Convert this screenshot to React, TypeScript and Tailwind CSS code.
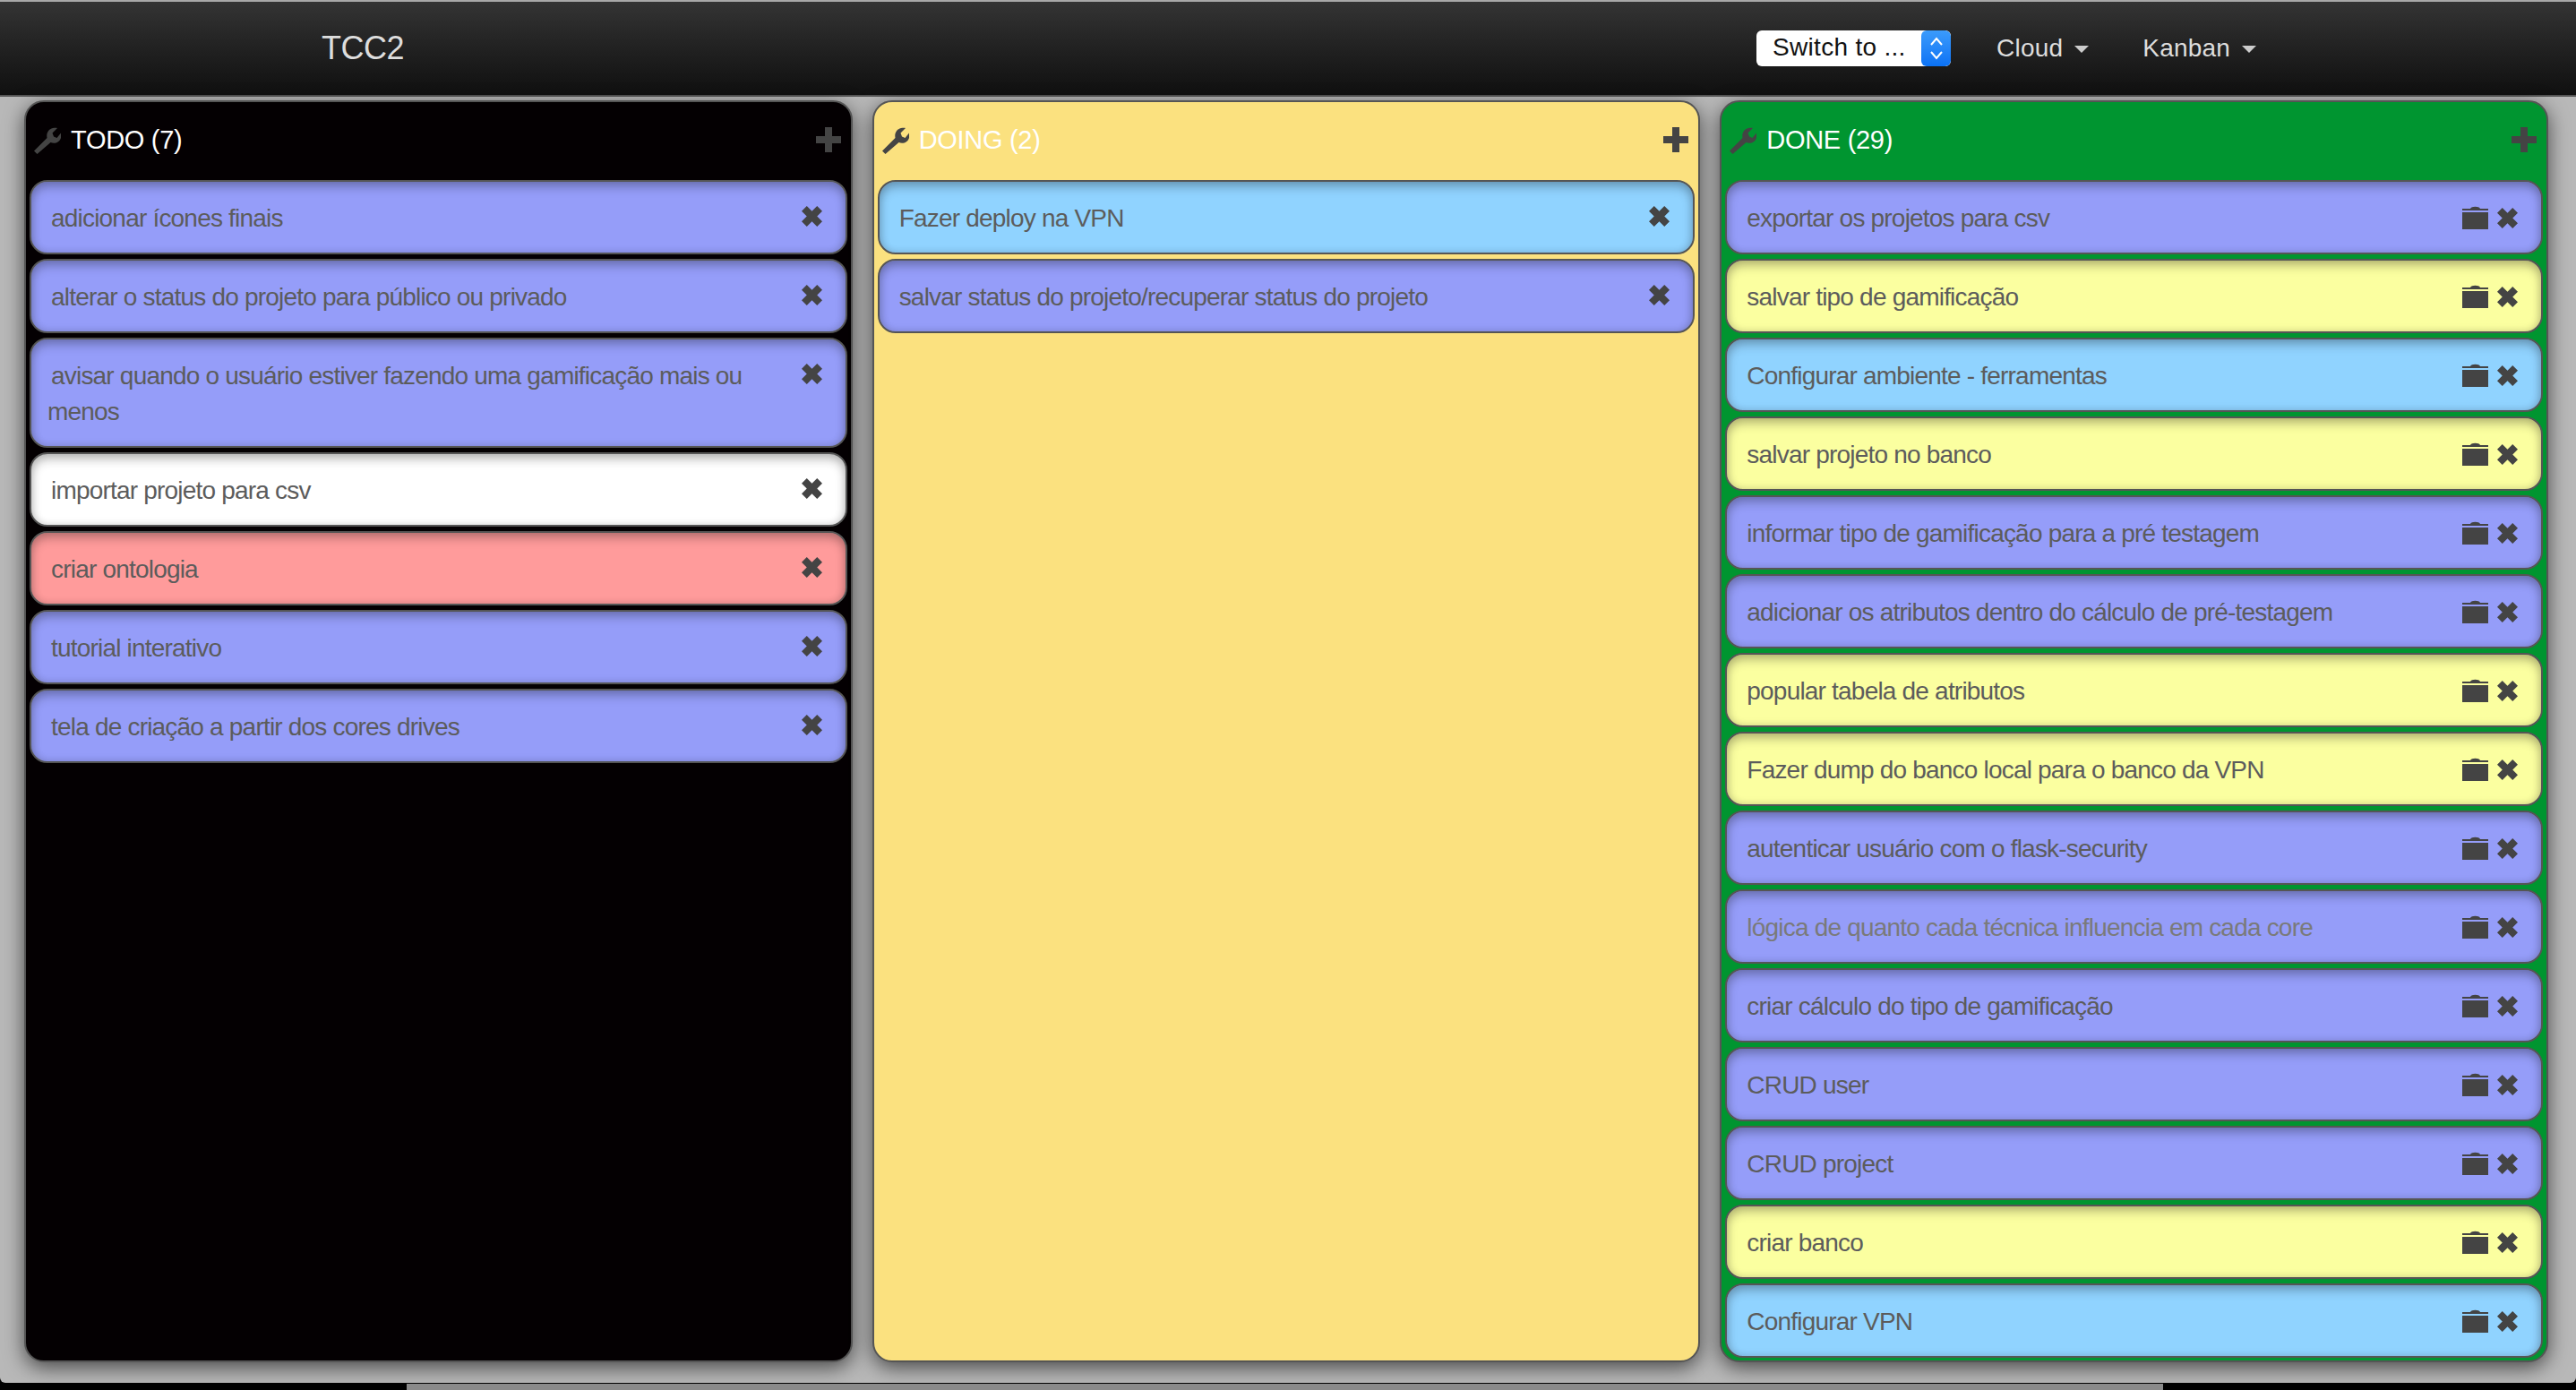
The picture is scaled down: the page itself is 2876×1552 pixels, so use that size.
const purple = "bg-[#959df9]";
const yellow = "bg-[#fbffa0]";
const blue = "bg-[#90d3ff]";
const red = "bg-[#ff9b9b]";
const white = "bg-white";

type Task = { text: string; color: string; muted?: boolean };

const todo: Task[] = [
  { text: "adicionar ícones finais", color: purple },
  { text: "alterar o status do projeto para público ou privado", color: purple },
  { text: "avisar quando o usuário estiver fazendo uma gamificação mais ou menos", color: purple },
  { text: "importar projeto para csv", color: white },
  { text: "criar ontologia", color: red },
  { text: "tutorial interativo", color: purple },
  { text: "tela de criação a partir dos cores drives", color: purple },
];

const doing: Task[] = [
  { text: "Fazer deploy na VPN", color: blue },
  { text: "salvar status do projeto/recuperar status do projeto", color: purple },
];

const done: Task[] = [
  { text: "exportar os projetos para csv", color: purple },
  { text: "salvar tipo de gamificação", color: yellow },
  { text: "Configurar ambiente - ferramentas", color: blue },
  { text: "salvar projeto no banco", color: yellow },
  { text: "informar tipo de gamificação para a pré testagem", color: purple },
  { text: "adicionar os atributos dentro do cálculo de pré-testagem", color: purple },
  { text: "popular tabela de atributos", color: yellow },
  { text: "Fazer dump do banco local para o banco da VPN", color: yellow },
  { text: "autenticar usuário com o flask-security", color: purple },
  { text: "lógica de quanto cada técnica influencia em cada core", color: purple, muted: true },
  { text: "criar cálculo do tipo de gamificação", color: purple },
  { text: "CRUD user", color: purple },
  { text: "CRUD project", color: purple },
  { text: "criar banco", color: yellow },
  { text: "Configurar VPN", color: blue },
];

function WrenchIcon() {
  return (
    <svg viewBox="0 0 30 30" className="h-[30px] w-[30px] shrink-0" fill="#444">
      <path d="M3.5 30 L0 26.5 L14.5 12 C13.5 7 16 2 21 1 C23 .5 25 .6 26 1 L20.5 6.5 L22 10.5 L25.5 12 L30 6.5 C30.5 8 30.5 10 30 12 C28.5 17 23 19 18.5 17 Z" />
    </svg>
  );
}

function PlusIcon() {
  return (
    <svg viewBox="0 0 28 28" className="mb-[2px] h-[28px] w-[28px] shrink-0" fill="#444">
      <path d="M10 0 H18 V10 H28 V18 H18 V28 H10 V18 H0 V10 H10 Z" />
    </svg>
  );
}

function RemoveIcon() {
  return (
    <svg viewBox="0 0 24 24" className="h-[23px] w-[23px] shrink-0" fill="#444">
      <path d="M6 0 L12 6 L18 0 L24 6 L18 12 L24 18 L18 24 L12 18 L6 24 L0 18 L6 12 L0 6 Z" />
    </svg>
  );
}

function TrashIcon() {
  return (
    <svg viewBox="0 0 29 26" className="h-[26px] w-[29px] shrink-0" fill="#444">
      <path d="M0 3 H9 C10 0 19 0 20 3 H29 V5 H0 Z" />
      <path d="M0 7 H29 V26 H0 Z" />
    </svg>
  );
}

function Caret() {
  return <span className="ml-[13px] mt-[2px] h-0 w-0 border-x-[8px] border-t-[8px] border-x-transparent border-t-[#ccc]" />;
}

function Card({ task, archive }: { task: Task; archive?: boolean }) {
  return (
    <div
      className={`flex items-start justify-between rounded-[20px] border-2 border-[#555] pb-[18px] pl-[18px] pr-[26px] pt-[21px] shadow-[inset_0_6px_12px_rgba(0,0,0,0.24),inset_0_0_10px_rgba(0,0,0,0.14)] ${task.color}`}
    >
      <p
        className={`indent-[4px] text-[28px] leading-[40px] tracking-[-0.8px] ${task.muted ? "text-[#7a7a7a]" : "text-[#5c5c5c]"}`}
      >
        {task.text}
      </p>
      <div className="ml-[30px] flex shrink-0 items-center gap-[10px] pt-[6px]">
        {archive && <TrashIcon />}
        <RemoveIcon />
      </div>
    </div>
  );
}

function Column({ title, color, tasks, archive }: { title: string; color: string; tasks: Task[]; archive?: boolean }) {
  return (
    <section className={`overflow-hidden rounded-[22px] border-2 border-[#555] px-[4px] shadow-[0_6px_22px_rgba(0,0,0,0.6)] ${color}`}>
      <header className="flex h-[87px] items-center justify-between pb-[2px] pl-[5px] pr-[7px]">
        <div className="flex items-center gap-[11px]">
          <WrenchIcon />
          <h2 className="text-[29px] leading-none tracking-[-0.3px] text-white">{title}</h2>
        </div>
        <PlusIcon />
      </header>
      <div className="flex flex-col gap-[5px]">
        {tasks.map((t) => (
          <Card key={t.text} task={t} archive={archive} />
        ))}
      </div>
    </section>
  );
}

export default function App() {
  return (
    <div className="flex h-[1552px] w-[2876px] flex-col overflow-hidden bg-black font-['Liberation_Sans',sans-serif]">
      <div className="flex h-[1544px] flex-col rounded-b-[6px] bg-[#b8b8b8]">
        <nav className="flex h-[108px] shrink-0 items-center justify-between border-t-2 border-b-2 border-t-[#a8a8a8] border-b-[#555] bg-gradient-to-b from-[#343434] to-[#101010] pl-[359px] pr-[357px]">
          <span className="text-[36px] leading-none tracking-[-0.5px] text-[#ddd]">TCC2</span>
          <div className="flex items-center text-[28px] leading-none tracking-[0.2px] text-[#ddd]">
            <div className="flex h-[40px] w-[217px] overflow-hidden rounded-[6px] bg-white">
              <span className="flex-1 pl-[18px] pt-[5px] tracking-[0.3px] text-[#111]">Switch to ...</span>
              <span className="flex w-[33px] items-center justify-center rounded-[6px] bg-gradient-to-b from-[#3b9bfb] to-[#0a72f5]">
                <svg viewBox="0 0 16 28" className="h-[28px] w-[16px]" fill="none" stroke="#fff" strokeWidth="2">
                  <path d="M2 10 L8 3 L14 10 M2 18 L8 25 L14 18" />
                </svg>
              </span>
            </div>
            <div className="ml-[51px] flex items-center">
              Cloud
              <Caret />
            </div>
            <div className="ml-[60px] flex items-center">
              Kanban
              <Caret />
            </div>
          </div>
        </nav>
        <main className="grid min-h-0 flex-1 grid-cols-3 gap-[22px] pb-[23px] pl-[27px] pr-[31px] pt-[4px]">
          <Column title="TODO (7)" color="bg-[#040002]" tasks={todo} />
          <Column title="DOING (2)" color="bg-[#fbe17f]" tasks={doing} />
          <Column title="DONE (29)" color="bg-[#009530]" tasks={done} archive />
        </main>
      </div>
      <div className="flex h-[8px] shrink-0 bg-black pl-[454px] pr-[461px] pt-[1px]">
        <div className="flex-1 bg-[#8a8a8a]" />
      </div>
    </div>
  );
}
